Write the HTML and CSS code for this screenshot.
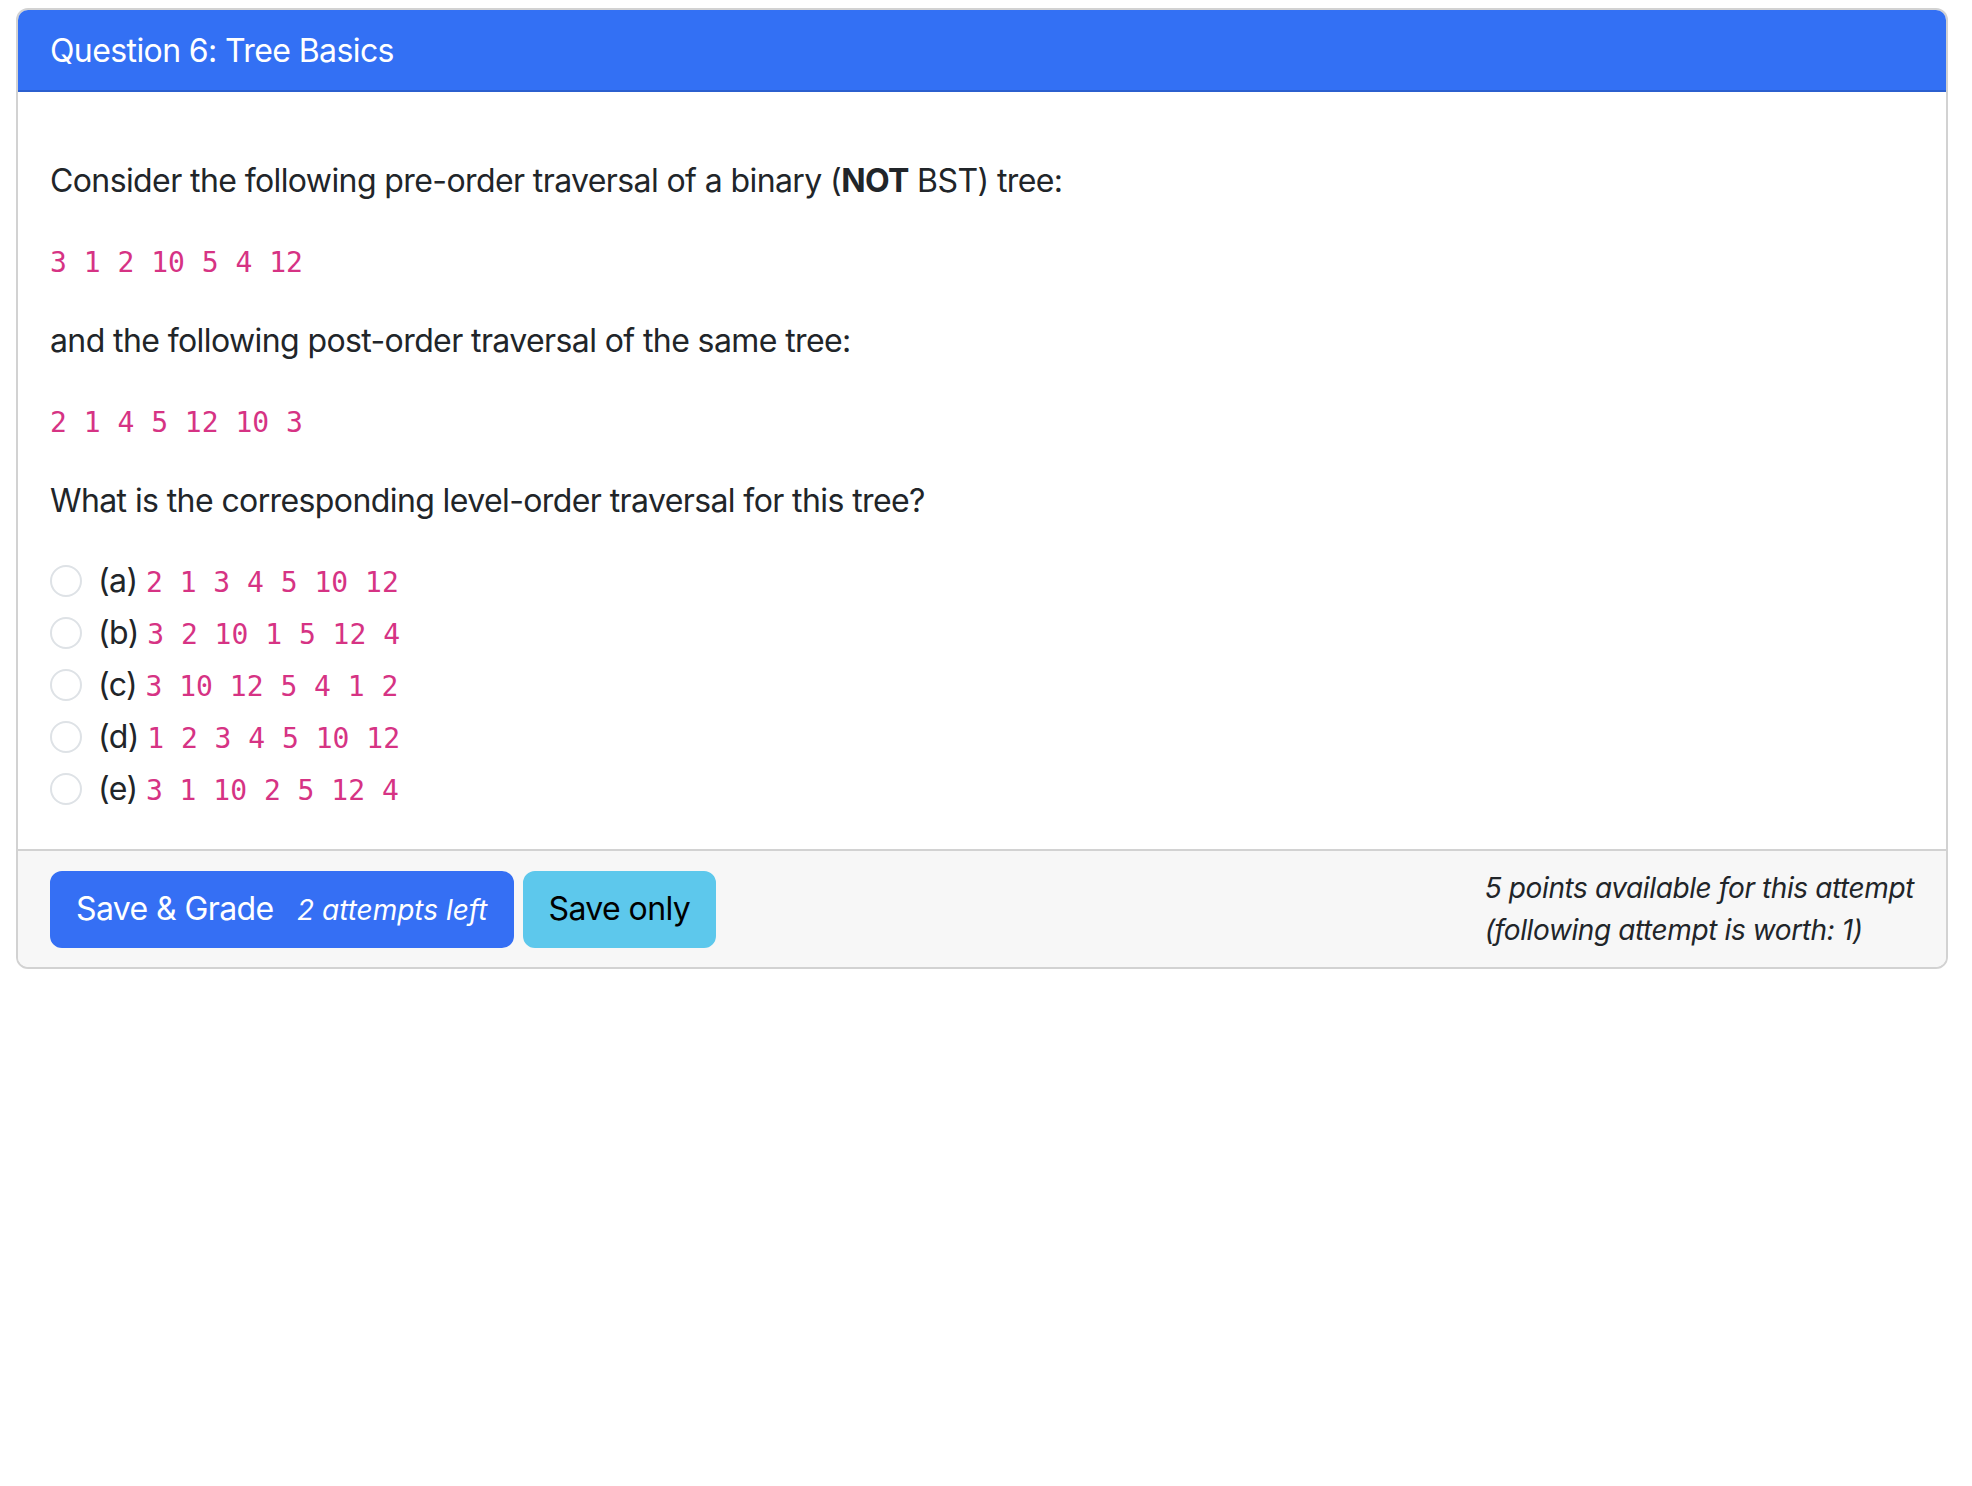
FILE: index.html
```html
<!DOCTYPE html>
<html lang="en">
<head>
<meta charset="utf-8">
<title>Question 6: Tree Basics</title>
<link rel="stylesheet" href="styles.css">
</head>
<body>
<div class="page">
  <div class="card">
    <div class="card-header">Question 6: Tree Basics</div>
    <div class="card-body">
      <p>Consider the following pre-order traversal of a binary (<strong>NOT</strong> BST) tree:</p>
      <p><code>3 1 2 10 5 4 12</code></p>
      <p>and the following post-order traversal of the same tree:</p>
      <p><code>2 1 4 5 12 10 3</code></p>
      <p>What is the corresponding level-order traversal for this tree?</p>
      <div class="options">
        <div class="form-check"><span class="radio"></span><span class="label">(a) <code>2 1 3 4 5 10 12</code></span></div>
        <div class="form-check"><span class="radio"></span><span class="label">(b) <code>3 2 10 1 5 12 4</code></span></div>
        <div class="form-check"><span class="radio"></span><span class="label">(c) <code>3 10 12 5 4 1 2</code></span></div>
        <div class="form-check"><span class="radio"></span><span class="label">(d) <code>1 2 3 4 5 10 12</code></span></div>
        <div class="form-check"><span class="radio"></span><span class="label">(e) <code>3 1 10 2 5 12 4</code></span></div>
      </div>
    </div>
    <div class="card-footer">
      <div class="buttons">
        <button class="btn btn-primary">Save &amp; Grade <small class="attempts">2 attempts left</small></button>
        <button class="btn btn-info">Save only</button>
      </div>
      <div class="points">
        <div>5 points available for this attempt</div>
        <div>(following attempt is worth: 1)</div>
      </div>
    </div>
  </div>
</div>
</body>
</html>
```

FILE: styles.css
```css
html, body {
  margin: 0;
  padding: 0;
  background: #ffffff;
}

body {
  font-family: Inter, "Noto Sans", "Liberation Sans", sans-serif;
  font-size: 32px;
  line-height: 48px;
  letter-spacing: -0.6px;
  color: #212529;
}

.page {
  padding: 8px 24px 0 16px;
}

.card {
  border: 2px solid #d2d2d2;
  border-radius: 12px;
  overflow: hidden;
  background: #ffffff;
}

.card-header {
  background: #3370f4;
  color: #ffffff;
  padding: 17px 32px 15px 32px;
  line-height: 48px;
  border-bottom: 2px solid #2b5fcf;
}

.card-body {
  padding: 65px 32px 36px 32px;
}

.card-body p {
  margin: 0 0 32px 0;
}

strong {
  font-weight: 700;
}

code {
  font-family: "DejaVu Sans Mono", "Liberation Mono", monospace;
  font-size: 28px;
  line-height: 1;
  letter-spacing: 0;
  color: #d63384;
}

.form-check {
  display: flex;
  align-items: flex-start;
  height: 48px;
  margin-bottom: 4px;
}

.form-check:last-child {
  margin-bottom: 0;
}

.radio {
  flex: none;
  width: 32px;
  height: 32px;
  box-sizing: border-box;
  border: 2px solid #dee2e6;
  border-radius: 50%;
  margin-top: 8px;
  margin-right: 16px;
  background: #ffffff;
}

.card-footer {
  background: #f7f7f7;
  border-top: 2px solid #d2d2d2;
  padding: 16px 32px;
  display: flex;
  align-items: center;
  justify-content: space-between;
}

.buttons {
  display: flex;
  gap: 9px;
}

.btn {
  font-family: inherit;
  font-size: 32px;
  line-height: 48px;
  letter-spacing: -0.6px;
  padding: 12px 24px;
  border: 2px solid transparent;
  border-radius: 12px;
  cursor: pointer;
}

.btn-primary {
  background: #356ff4;
  border-color: #356ff4;
  color: #ffffff;
}

.btn-info {
  background: #5dc8ec;
  border-color: #5dc8ec;
  color: #000000;
}

.attempts {
  font-size: 28px;
  font-style: italic;
  letter-spacing: 0;
  margin-left: 15px;
}

.points {
  font-size: 28px;
  line-height: 42px;
  font-style: italic;
  letter-spacing: -0.4px;
  color: #212529;
}
```
